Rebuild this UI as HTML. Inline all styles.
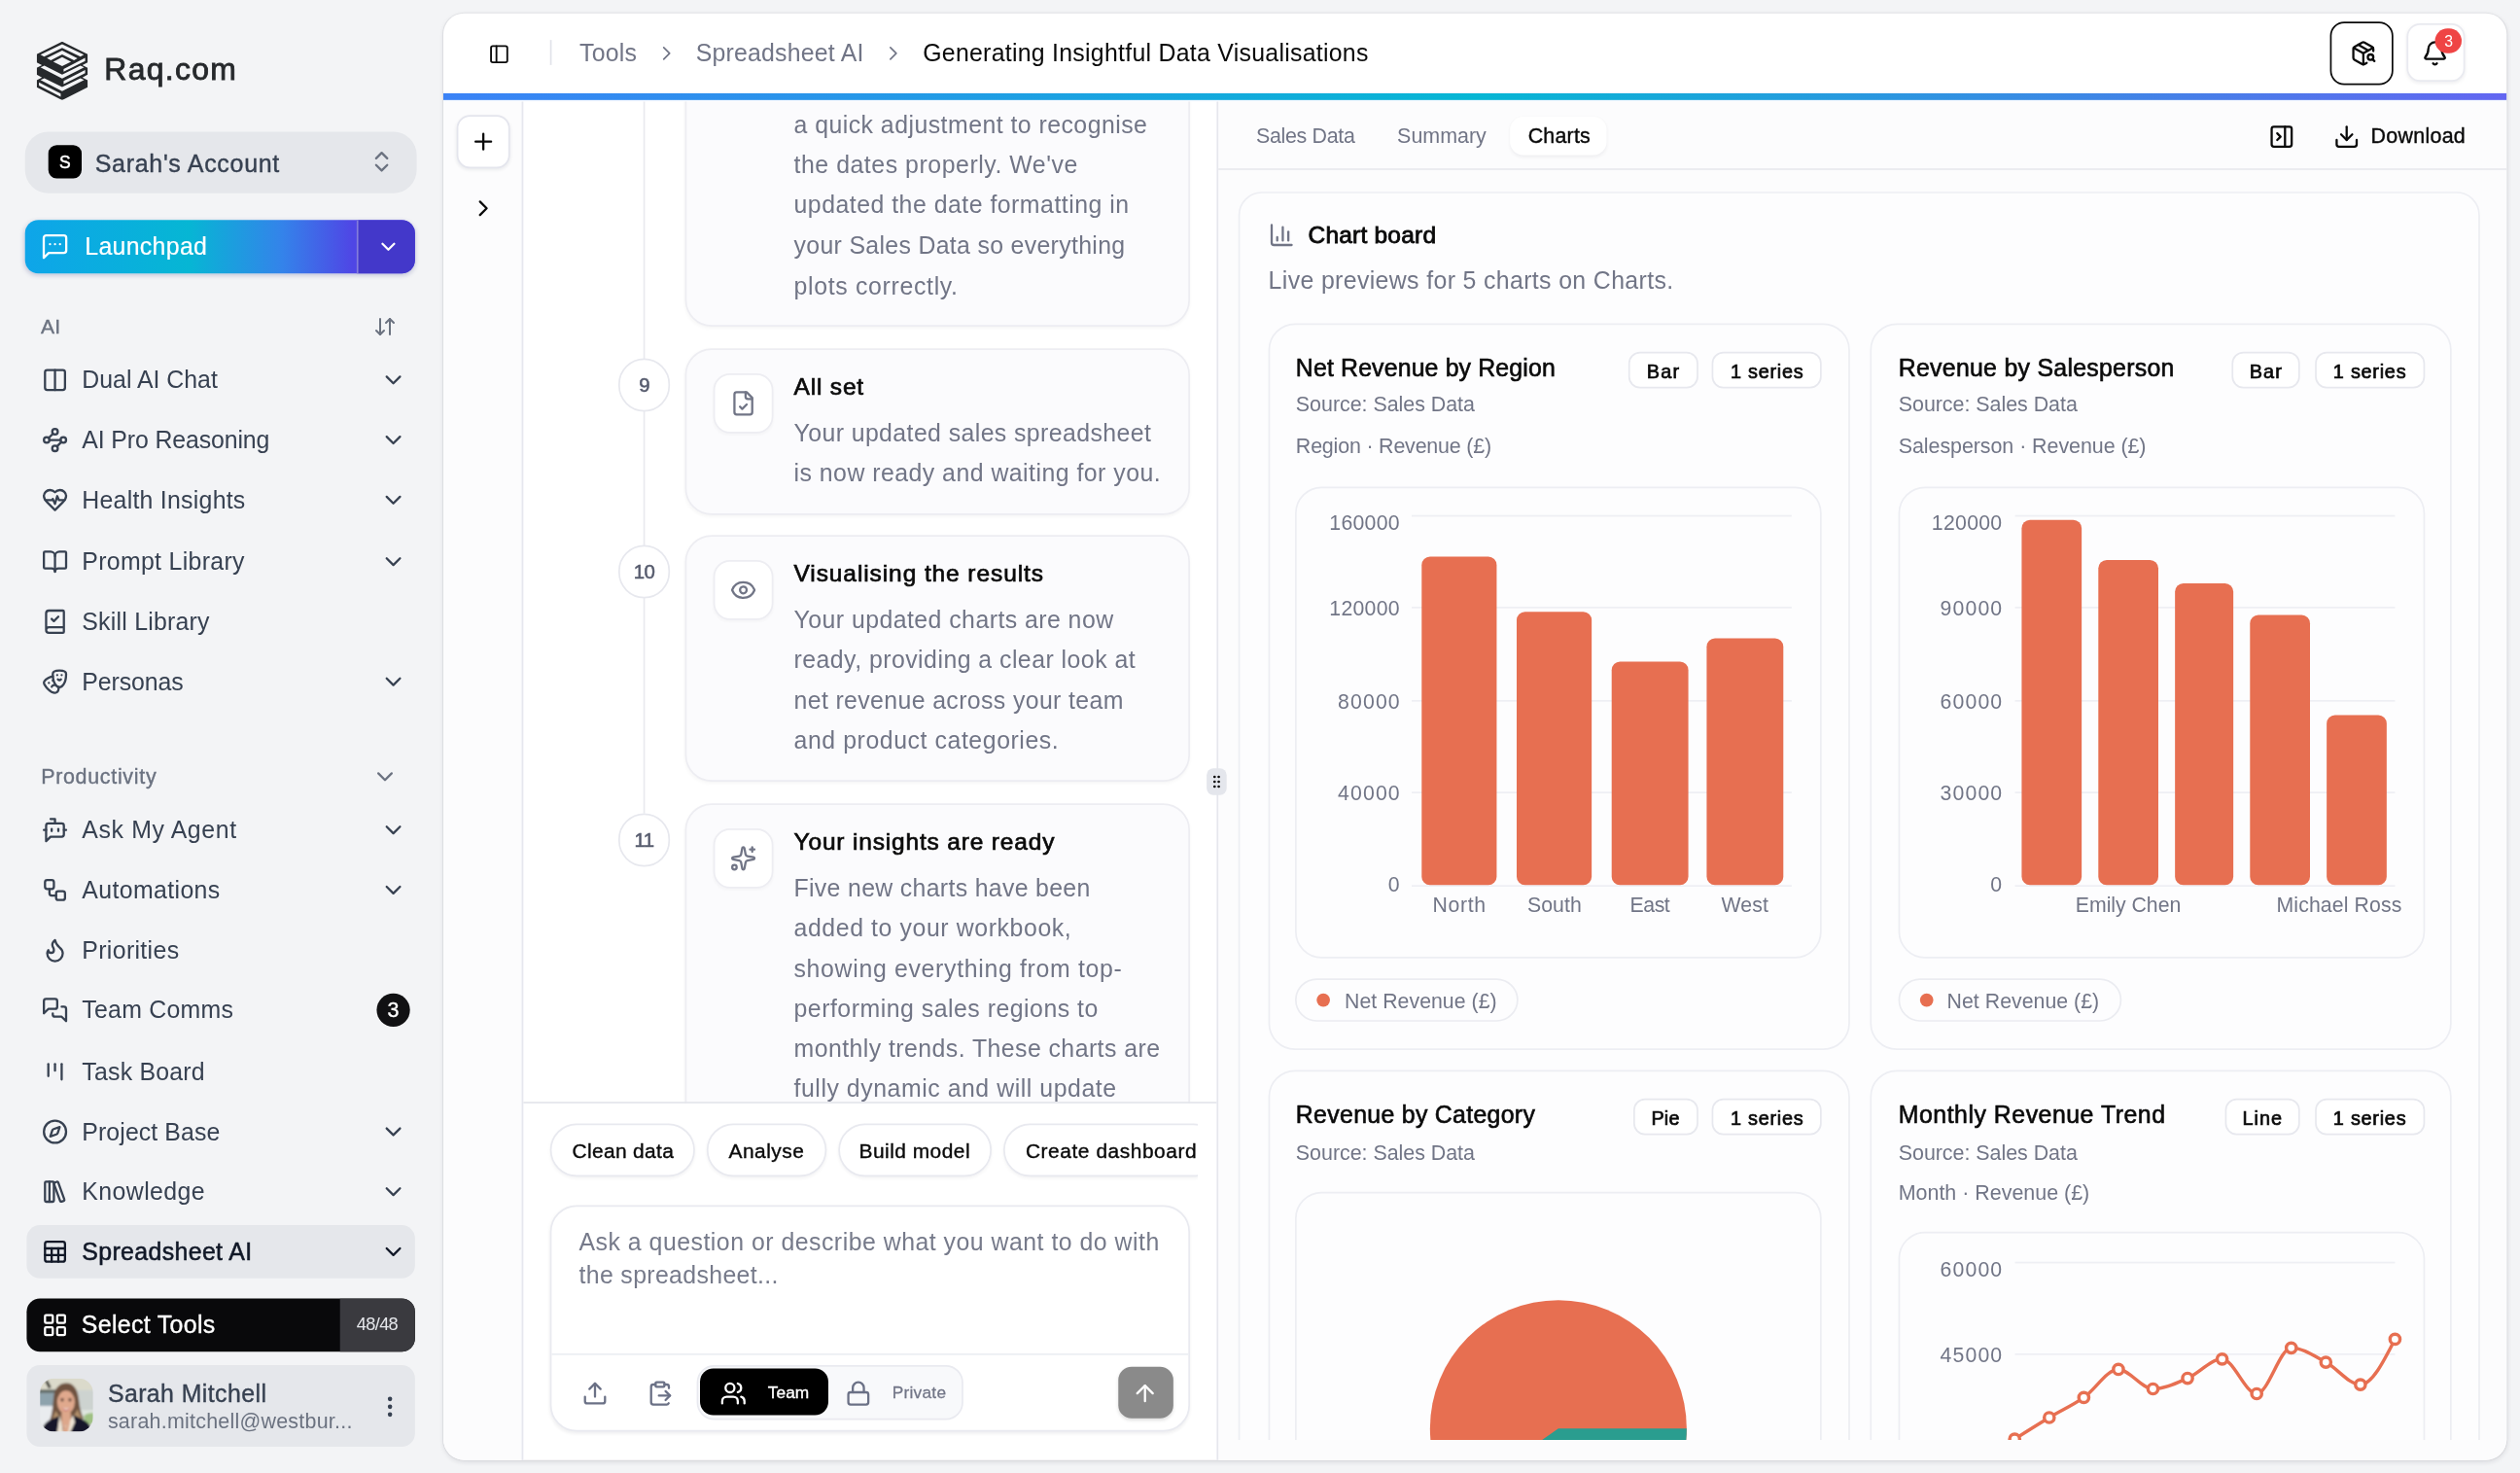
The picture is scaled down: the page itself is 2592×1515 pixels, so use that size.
<!DOCTYPE html><html lang="en">
<head>
<meta charset="utf-8">
<title>Raq.com – Spreadsheet AI – Generating Insightful Data Visualisations</title>
<style>
*{box-sizing:border-box;margin:0;padding:0}
html,body{width:2592px;height:1515px;overflow:hidden;background:#f3f4f6}
body{font-family:"Liberation Sans",sans-serif;color:#0a0a0a;-webkit-font-smoothing:antialiased}
#app{position:absolute;left:0;top:0;width:1512px;height:883.75px;transform:scale(1.7142857);transform-origin:0 0;overflow:hidden;background:#f3f4f6}
.a{position:absolute}
.t{position:absolute;white-space:nowrap;line-height:20px;top:calc(var(--b)*1px - 10px - .3467em);font-size:14.5px}
.m{-webkit-text-stroke:.22px currentColor}
.b{-webkit-text-stroke:.4px currentColor}
.i{position:absolute;fill:none;stroke:currentColor;stroke-width:2;stroke-linecap:round;stroke-linejoin:round;width:16px;height:16px;overflow:visible}
.nav{color:#374151}
.mut{color:#6b7280}
.sl{color:#6a6f82}
.card{position:absolute;background:#fbfbfd;border:1px solid #ededf2;border-radius:16px;box-shadow:0 1px 2px rgba(16,24,40,.035)}
.box{position:absolute;background:#fff;border:1px solid #ededf2;border-radius:10px;box-shadow:0 1px 1.5px rgba(16,24,40,.025)}
.num{position:absolute;width:31.8px;height:31.8px;border-radius:50%;background:#fff;border:1px solid #e7e8ee}
.chip{position:absolute;height:31.5px;border-radius:16px;background:#fff;border:1px solid #e8e9ef;box-shadow:0 1px 2px rgba(16,24,40,.05)}
.bdg{position:absolute;height:22.2px;border-radius:7px;background:#fff;border:1px solid #e7e8ee}
.cbox{position:absolute;background:#fdfdfe;border:1px solid #edeef3;border-radius:16px}
.gl{position:absolute;height:1px;background:#eeeff4}
.bar{position:absolute;background:#e76f51;border-radius:5px}
.pill{position:absolute;height:25.3px;border-radius:13px;background:#fdfdfe;border:1px solid #ebecf1}
.dot{position:absolute;width:8px;height:8px;border-radius:50%;background:#e76f51}
</style>
</head>
<body>
<svg width="0" height="0" style="position:absolute">
<defs>
<symbol id="cd" viewBox="0 0 24 24"><path d="m6 9 6 6 6-6"></path></symbol>
<symbol id="cr" viewBox="0 0 24 24"><path d="m9 18 6-6-6-6"></path></symbol>
</defs>
</svg>
<div id="app">
<!-- sidebar -->
<svg class="a" style="left:22.1px;top:24.9px;width:30.6px;height:35.1px" viewBox="15.5 13.5 103 118.5">
<polygon fill="#26292c" points="67,13.5 118.5,39 118.5,55.5 108,61 118.5,66.5 118.5,80.5 108,86 118.5,91.5 118.5,106 67,132 15.5,106 15.5,91.5 26,86 15.5,80.5 15.5,66.5 26,61 15.5,55.5 15.5,39"></polygon>
<g fill="#f3f4f6">
<polygon points="23,40 67,18.5 111,40 104,44 67,26 30.5,44"></polygon>
<polygon points="36,47 67,31.5 98,47.5 91,51 67,39.5 44,51"></polygon>
<polygon points="67,45 85,54 67,63 49,54"></polygon>
<polygon points="70,69 113.5,46.5 113.5,52.5 70,74.5"></polygon>
<polygon points="23,65.5 31,62 67,80.5 104,62 111.5,65.5 67,88"></polygon>
<polygon points="70,93 113.5,71 113.5,77.5 70,99.5"></polygon>
<polygon points="23,91 31,87.5 67,105.5 104,87.5 111.5,91 67,113.5"></polygon>
<polygon points="20,96 64,118.5 64,125 20,102.5"></polygon>
</g></svg>
<span class="t m" style="left: 62.6px; --b: 48.4; font-size: 18.6px; color: rgb(38, 41, 44); -webkit-text-stroke-width: 0.5px; letter-spacing: 0.766px;">Raq.com</span>
<div class="a" style="left:15.4px;top:79.4px;width:234.4px;height:37.1px;border-radius:14px;background:#e5e7eb"></div>
<div class="a" style="left:29px;top:87.2px;width:20.1px;height:20.1px;border-radius:5px;background:#000"></div>
<span class="t m" style="left:29px;width:20.1px;text-align:center;--b:101.2;font-size:10.2px;color:#fff;-webkit-text-stroke-width:.3px">S</span>
<span class="t nav m" style="left: 57px; --b: 102.85; font-size: 14.6px; letter-spacing: 0.399px;">Sarah's Account</span>
<svg class="i" style="left:220.6px;top:89.3px;color:#6b7280" viewBox="0 0 24 24"><path d="m7 15 5 5 5-5"></path><path d="m7 9 5-5 5 5"></path></svg>
<div class="a" style="left:15.45px;top:131.6px;width:233.95px;height:32.1px;border-radius:8px;background:linear-gradient(90deg,#0ea5e9 0%,#06b6d4 42%,#3483ea 66%,#4f46e5 84%);box-shadow:0 1px 3px rgba(30,41,120,.25);overflow:hidden"><div class="a" style="left:198.75px;top:0;width:36px;height:33px;background:#4338ca;border-left:1px solid rgba(255,255,255,.35)"></div></div>
<svg class="i" style="left:23.8px;top:139.4px;width:18px;height:18px;color:#fff;stroke-width:1.8" viewBox="0 0 24 24"><path d="M21 15a2 2 0 0 1-2 2H7l-4 4V5a2 2 0 0 1 2-2h14a2 2 0 0 1 2 2z"></path><path d="M8 10h.01"></path><path d="M12 10h.01"></path><path d="M16 10h.01"></path></svg>
<span class="t m" style="left: 50.9px; --b: 152.6; color: rgb(255, 255, 255); -webkit-text-stroke-width: 0.12px; letter-spacing: 0.192px;">Launchpad</span>
<svg class="i" style="left:225.85px;top:140.8px;width:14px;height:14px;color:#fff;stroke-width:2.2"><use href="#cd"></use></svg>
<span class="t mut m" style="left: 24.5px; --b: 200.7; font-size: 12.3px; letter-spacing: 0.075px;">AI</span>
<svg class="i" style="left:224.4px;top:189.3px;width:14px;height:14px;color:#6b7280" viewBox="0 0 24 24"><path d="m3 16 4 4 4-4"></path><path d="M7 20V4"></path><path d="m21 8-4-4-4 4"></path><path d="M17 4v16"></path></svg>
<svg class="i" style="left:24.7px;top:219.85px;color:#374151" viewBox="0 0 24 24"><rect width="18" height="18" x="3" y="3" rx="2"></rect><path d="M12 3v18"></path></svg>
<span class="t" style="left: 49.2px; --b: 232.95; color: rgb(55, 65, 81); letter-spacing: -0.002px;">Dual AI Chat</span>
<svg class="i" style="left:227.8px;top:219.85px;color:#374151"><use href="#cd"></use></svg>
<svg class="i" style="left:24.7px;top:256.11px;color:#374151" viewBox="0 0 24 24"><circle cx="12" cy="4.5" r="2.5"></circle><path d="m10.2 6.3-3.9 3.9"></path><circle cx="4.5" cy="12" r="2.5"></circle><path d="M7 12h10"></path><circle cx="19.5" cy="12" r="2.5"></circle><path d="m13.8 17.7 3.9-3.9"></path><circle cx="12" cy="19.5" r="2.5"></circle></svg>
<span class="t" style="left: 49.2px; --b: 269.21; color: rgb(55, 65, 81); letter-spacing: -0.07px;">AI Pro Reasoning</span>
<svg class="i" style="left:227.8px;top:256.11px;color:#374151"><use href="#cd"></use></svg>
<svg class="i" style="left:24.7px;top:292.37px;color:#374151" viewBox="0 0 24 24"><path d="M19 14c1.49-1.46 3-3.21 3-5.5A5.5 5.5 0 0 0 16.5 3c-1.76 0-3 .5-4.5 2-1.5-1.5-2.74-2-4.5-2A5.5 5.5 0 0 0 2 8.5c0 2.3 1.5 4.05 3 5.5l7 7Z"></path><path d="M3.22 12H9.5l.5-1 2 4.5 2-7 1.5 3.5h5.27"></path></svg>
<span class="t" style="left: 49.2px; --b: 305.47; color: rgb(55, 65, 81); letter-spacing: 0.148px;">Health Insights</span>
<svg class="i" style="left:227.8px;top:292.37px;color:#374151"><use href="#cd"></use></svg>
<svg class="i" style="left:24.7px;top:328.63px;color:#374151" viewBox="0 0 24 24"><path d="M12 7v14"></path><path d="M3 18a1 1 0 0 1-1-1V4a1 1 0 0 1 1-1h5a4 4 0 0 1 4 4 4 4 0 0 1 4-4h5a1 1 0 0 1 1 1v13a1 1 0 0 1-1 1h-6a3 3 0 0 0-3 3 3 3 0 0 0-3-3z"></path></svg>
<span class="t" style="left: 49.2px; --b: 341.73; color: rgb(55, 65, 81); letter-spacing: 0.185px;">Prompt Library</span>
<svg class="i" style="left:227.8px;top:328.63px;color:#374151"><use href="#cd"></use></svg>
<svg class="i" style="left:24.7px;top:364.89px;color:#374151" viewBox="0 0 24 24"><path d="M4 19.5v-15A2.5 2.5 0 0 1 6.5 2H19a1 1 0 0 1 1 1v18a1 1 0 0 1-1 1H6.5a1 1 0 0 1 0-5H20"></path><path d="m9 9.5 2 2 4-4"></path></svg>
<span class="t" style="left: 49.2px; --b: 377.99; color: rgb(55, 65, 81); letter-spacing: 0.13px;">Skill Library</span>
<svg class="i" style="left:24.7px;top:401.15px;color:#374151" viewBox="0 0 24 24"><path d="M10 11h.01"></path><path d="M14 6h.01"></path><path d="M18 6h.01"></path><path d="M6.5 13.1h.01"></path><path d="M22 5c0 9-4 12-6 12s-6-3-6-12c0-2 2-3 6-3s6 1 6 3"></path><path d="M17.4 9.9c-.8.8-2 .8-2.8 0"></path><path d="M10.1 7.1C9 7.2 7.7 7.7 6 8.6c-3.5 2-4.7 3.9-3.7 5.6 4.5 7.8 9.5 8.4 11.2 7.4.9-.5 1.9-2.1 1.9-4.7"></path><path d="M9.1 16.5c.3-1.1 1.4-1.7 2.4-1.4"></path></svg>
<span class="t" style="left: 49.2px; --b: 414.25; color: rgb(55, 65, 81); letter-spacing: -0.052px;">Personas</span>
<svg class="i" style="left:227.8px;top:401.15px;color:#374151"><use href="#cd"></use></svg>
<span class="t mut m" style="left: 24.6px; --b: 469.9; font-size: 12.5px; letter-spacing: 0.408px;">Productivity</span>
<svg class="i" style="left:223.4px;top:457.6px;color:#6b7280"><use href="#cd"></use></svg>
<svg class="i" style="left:24.7px;top:489.60px;color:#374151" viewBox="0 0 24 24"><path d="M12 6V2H8"></path><path d="m8 18-4 4V8a2 2 0 0 1 2-2h12a2 2 0 0 1 2 2v8a2 2 0 0 1-2 2Z"></path><path d="M2 12h2"></path><path d="M9 11v2"></path><path d="M15 11v2"></path><path d="M20 12h2"></path></svg>
<span class="t" style="left: 49.2px; --b: 502.70; color: rgb(55, 65, 81); letter-spacing: 0.359px;">Ask My Agent</span>
<svg class="i" style="left:227.8px;top:489.60px;color:#374151"><use href="#cd"></use></svg>
<svg class="i" style="left:24.7px;top:525.86px;color:#374151" viewBox="0 0 24 24"><rect width="8" height="8" x="3" y="3" rx="2"></rect><path d="M7 11v4a2 2 0 0 0 2 2h4"></path><rect width="8" height="8" x="13" y="13" rx="2"></rect></svg>
<span class="t" style="left: 49.2px; --b: 538.96; color: rgb(55, 65, 81); letter-spacing: 0.219px;">Automations</span>
<svg class="i" style="left:227.8px;top:525.86px;color:#374151"><use href="#cd"></use></svg>
<svg class="i" style="left:24.7px;top:562.12px;color:#374151" viewBox="0 0 24 24"><path d="M8.5 14.5A2.5 2.5 0 0 0 11 12c0-1.38-.5-2-1-3-1.072-2.143-.224-4.054 2-6 .5 2.5 2 4.9 4 6.5 2 1.6 3 3.5 3 5.5a7 7 0 1 1-14 0c0-1.153.433-2.294 1-3a2.5 2.5 0 0 0 2.5 2.5z"></path></svg>
<span class="t" style="left: 49.2px; --b: 575.22; color: rgb(55, 65, 81); letter-spacing: 0.199px;">Priorities</span>
<svg class="i" style="left:24.7px;top:598.38px;color:#374151" viewBox="0 0 24 24"><path d="M14 9a2 2 0 0 1-2 2H6l-4 4V4a2 2 0 0 1 2-2h8a2 2 0 0 1 2 2z"></path><path d="M18 9h2a2 2 0 0 1 2 2v11l-4-4h-6a2 2 0 0 1-2-2v-1"></path></svg>
<span class="t" style="left: 49.2px; --b: 611.48; color: rgb(55, 65, 81); letter-spacing: 0.151px;">Team Comms</span>
<svg class="i" style="left:24.7px;top:634.64px;color:#374151" viewBox="0 0 24 24"><path d="M6 5v11"></path><path d="M12 5v6"></path><path d="M18 5v14"></path></svg>
<span class="t" style="left: 49.2px; --b: 647.74; color: rgb(55, 65, 81); letter-spacing: 0.128px;">Task Board</span>
<svg class="i" style="left:24.7px;top:670.90px;color:#374151" viewBox="0 0 24 24"><circle cx="12" cy="12" r="10"></circle><path d="m16.24 7.76-1.804 5.411a2 2 0 0 1-1.265 1.265L7.76 16.24l1.804-5.411a2 2 0 0 1 1.265-1.265z"></path></svg>
<span class="t" style="left: 49.2px; --b: 684.00; color: rgb(55, 65, 81); letter-spacing: 0.053px;">Project Base</span>
<svg class="i" style="left:227.8px;top:670.90px;color:#374151"><use href="#cd"></use></svg>
<svg class="i" style="left:24.7px;top:707.16px;color:#374151" viewBox="0 0 24 24"><rect width="8" height="18" x="3" y="3" rx="1"></rect><path d="M7 3v18"></path><path d="M20.4 18.9c.2.5-.1 1.1-.6 1.3l-1.9.7c-.5.2-1.1-.1-1.3-.6L11.1 5.1c-.2-.5.1-1.1.6-1.3l1.9-.7c.5-.2 1.1.1 1.3.6Z"></path></svg>
<span class="t" style="left: 49.2px; --b: 720.26; color: rgb(55, 65, 81); letter-spacing: 0.244px;">Knowledge</span>
<svg class="i" style="left:227.8px;top:707.16px;color:#374151"><use href="#cd"></use></svg>
<div class="a" style="left:16px;top:735.12px;width:233.4px;height:32.2px;border-radius:8px;background:#e5e7eb"></div>
<svg class="i" style="left:24.7px;top:743.42px;color:#111827" viewBox="0 0 24 24"><rect width="18" height="18" x="3" y="3" rx="2"></rect><path d="M3 9h18"></path><path d="M3 15h18"></path><path d="M9 9v12"></path><path d="M15 9v12"></path></svg>
<span class="t m" style="left: 49.2px; --b: 756.52; color: rgb(17, 24, 39); -webkit-text-stroke-width: 0.32px; letter-spacing: 0.218px;">Spreadsheet AI</span>
<svg class="i" style="left:227.8px;top:743.42px;color:#111827"><use href="#cd"></use></svg>
<div class="a" style="left:225.9px;top:595.9px;width:20px;height:20px;border-radius:50%;background:#111113"></div>
<span class="t m" style="left:225.9px;width:20px;text-align:center;--b:610.4;font-size:12.5px;color:#fff">3</span>
<div class="a" style="left:15.8px;top:778.7px;width:233.6px;height:32.3px;border-radius:8px;background:#09090b;overflow:hidden"><div class="a" style="left:187.8px;top:0;width:46px;height:33px;background:#3a3a3f"></div></div>
<svg class="i" style="left:24.5px;top:786.9px;color:#fff" viewBox="0 0 24 24"><rect width="7" height="7" x="3" y="3" rx="1"></rect><rect width="7" height="7" x="14" y="3" rx="1"></rect><rect width="7" height="7" x="14" y="14" rx="1"></rect><rect width="7" height="7" x="3" y="14" rx="1"></rect></svg>
<span class="t m" style="left: 48.9px; --b: 800; color: rgb(255, 255, 255); letter-spacing: 0.207px;">Select Tools</span>
<span class="t" style="left: 214px; --b: 798.1; font-size: 10.6px; color: rgb(229, 231, 235); letter-spacing: -0.379px;">48/48</span>
<div class="a" style="left:15.8px;top:819.2px;width:233.6px;height:48.6px;border-radius:8px;background:#e5e7eb"></div>
<svg class="a" style="left:24.35px;top:827.3px;width:31.8px;height:31.9px" viewBox="0 0 32 32" preserveAspectRatio="none">
<defs><clipPath id="avc"><rect width="32" height="32" rx="8.500"></rect></clipPath>
<filter id="avb" x="-10%" y="-10%" width="120%" height="120%"><feGaussianBlur stdDeviation=".5"></feGaussianBlur></filter></defs>
<g clip-path="url(#avc)"><g filter="url(#avb)">
<rect x="-2" y="-2" width="36" height="36" fill="#d9dbd4"></rect>
<rect x="-2" y="-2" width="36" height="9.500" fill="#dbdacb"></rect>
<rect x="-2" y="6.800" width="12" height="2" fill="#59625f"></rect>
<rect x="-2" y="8.800" width="11" height="7.800" fill="#8ea3ad"></rect>
<rect x="-2" y="16.600" width="11" height="18" fill="#e9ecef"></rect>
<rect x="22" y="7" width="12" height="14" fill="#cdd3d0"></rect>
<rect x="22" y="19" width="12" height="8" fill="#dfe5df"></rect>
<path d="M26.500 22.500c2-1.500 4-2 6-1.500v6.500h-5.500z" fill="#9fc183"></path>
<path d="M3.800 1.500l2.200 4.200" stroke="#34342f" stroke-width="1.700" fill="none"></path>
<path d="M16 2.800c-4.800 0-7.300 3.600-7.800 8.600-.5 5-.7 9.800-2.200 13.600l6 1.500 8.500-.5 5.800-2c-1.800-3.200-2.400-7.200-2.900-11.700-.6-5-2.700-9.500-7.400-9.500z" fill="#6f5240"></path>
<path d="M9.300 19.500c-.8 3.200-1.800 4.800-2.800 6l6-1.500z M22.800 18.500c.8 3 1.800 4.800 3.200 6l-6.200-.8z" fill="#b08f6b"></path>
<ellipse cx="15.700" cy="14.300" rx="5.300" ry="6.900" fill="#e0a98d"></ellipse>
<path d="M10.300 10.200c1.200-3.400 4-4.700 6.600-3.800 1.800.6 3.300 2 4 4.200-.4-3.600-2.300-6-5.200-6-3 0-5 2.200-5.400 5.600z" fill="#6f5240"></path>
<path d="M12.300 12.300h2.200 M17 12.300h2.200" stroke="#5a3d30" stroke-width=".7" fill="none"></path>
<ellipse cx="13.400" cy="13.300" rx=".9" ry=".5" fill="#3f2b25"></ellipse><ellipse cx="18.100" cy="13.300" rx=".9" ry=".5" fill="#3f2b25"></ellipse>
<path d="M13.200 17.300c1.500 1.400 3.600 1.400 5.100 0-.6 1.800-1.500 2.500-2.600 2.500s-2-.7-2.500-2.500z" fill="#c9736b"></path>
<path d="M13.700 17.600c1.300.7 2.800.7 4.100 0-.5.900-1.200 1.200-2 1.200s-1.600-.3-2.100-1.200z" fill="#fbf4f0"></path>
<path d="M13 20.500h5.600v8h-5.600z" fill="#dda78b"></path>
<path d="M1.200 33c.2-6 3.600-8 10.400-10.300l3.400 10.300z M31.500 33c-.5-5.500-3.200-8-11.200-10.800l-4.300 10.800z" fill="#131929"></path>
<path d="M11.800 22.300l-1.500 10.700h3.800l-1-6z M19.900 22l1.200 4.300-3 6.700h-3.500z" fill="#efe5d6"></path>
<path d="M13.300 25.500l2.300 4 2.700-4-1.500 7.500h-2.700z" fill="#dda78b"></path>
</g></g></svg>
<span class="t nav m" style="left: 64.7px; --b: 841.1; letter-spacing: 0.248px;">Sarah Mitchell</span>
<span class="t mut" style="left: 64.7px; --b: 856.9; font-size: 12.5px; letter-spacing: 0.141px;">sarah.mitchell@westbur...</span>
<svg class="i" style="left:225.7px;top:835.7px;color:#374151" viewBox="0 0 24 24"><circle cx="12" cy="5" r="1"></circle><circle cx="12" cy="12" r="1"></circle><circle cx="12" cy="19" r="1"></circle></svg>
<!-- main -->
<div class="a" style="left:265.8px;top:7.9px;width:1238.4px;height:867.9px;border-radius:12.5px;background:#fff;box-shadow:0 1px 3px rgba(16,24,40,.10),0 0 0 .6px rgba(16,24,40,.05)"></div>
<div class="a" style="left:265.8px;top:7.9px;width:1238.4px;height:867.9px;border-radius:12.5px;overflow:hidden">
<div class="a" style="left:0;top:53px;width:48.2px;height:820px;background:#fcfcfd;border-right:1px solid #e6e7ee"></div>
<div class="a" style="left:464.1px;top:53px;width:780px;height:820px;background:#fcfcfd;border-left:1.1px solid #e6e7ed"></div>
<div class="a" style="left:0;top:48.1px;width:1238.4px;height:4.4px;background:linear-gradient(90deg,#3b82f6 0%,#06b6d4 50%,#6366f1 100%);box-shadow:0 0 1.2px rgba(59,130,246,.3)"></div>
</div>
<svg class="i" style="left:293.1px;top:25.6px;width:13px;height:13px;color:#0a0a0a" viewBox="0 0 24 24"><rect width="18" height="18" x="3" y="3" rx="2"></rect><path d="M9 3v18"></path></svg>
<div class="a" style="left:329.7px;top:23.8px;width:1px;height:15.4px;background:#e2e3ea"></div>
<span class="t" style="left: 347.7px; --b: 36.8; color: rgb(113, 117, 134); letter-spacing: 0.135px;">Tools</span>
<svg class="i" style="left:392.8px;top:24.8px;width:14px;height:14px;color:#717586;stroke-width:1.7"><use href="#cr"></use></svg>
<span class="t" style="left: 417.5px; --b: 36.8; color: rgb(113, 117, 134); letter-spacing: 0.118px;">Spreadsheet AI</span>
<svg class="i" style="left:528.5px;top:24.8px;width:14px;height:14px;color:#717586;stroke-width:1.7"><use href="#cr"></use></svg>
<span class="t" style="left: 553.7px; --b: 36.8; color: rgb(10, 10, 10); letter-spacing: 0.16px;">Generating Insightful Data Visualisations</span>
<div class="a" style="left:1398.4px;top:13.2px;width:38px;height:37.4px;border-radius:8.5px;border:1.3px solid #0a0a0a;background:#fff"></div>
<svg class="i" style="left:1409.9px;top:23.7px;color:#0a0a0a" viewBox="0 0 24 24"><path d="M21 10V8a2 2 0 0 0-1-1.73l-7-4a2 2 0 0 0-2 0l-7 4A2 2 0 0 0 3 8v8a2 2 0 0 0 1 1.73l7 4a2 2 0 0 0 2 0l2-1.14"></path><path d="m7.500 4.270 9 5.150"></path><path d="M3.290 7 12 12l8.710-5"></path><path d="M12 22V12"></path><circle cx="18.500" cy="15.500" r="2.500"></circle><path d="M20.270 17.270 22 19"></path></svg>
<div class="a" style="left:1443.8px;top:13.9px;width:35.6px;height:35.6px;border-radius:8px;border:1px solid #e9eaf0;background:#fff;box-shadow:0 1px 2px rgba(16,24,40,.06)"></div>
<svg class="i" style="left:1453.2px;top:23.6px;color:#0a0a0a" viewBox="0 0 24 24"><path d="M10.268 21a2 2 0 0 0 3.464 0"></path><path d="M3.262 15.326A1 1 0 0 0 4 17h16a1 1 0 0 0 .74-1.673C19.410 13.956 18 12.499 18 8A6 6 0 0 0 6 8c0 4.499-1.411 5.956-2.738 7.326"></path></svg>
<div class="a" style="left:1461.3px;top:16.7px;width:15.8px;height:15.8px;border-radius:50%;background:#ef4444"></div>
<span class="t" style="left:1461.3px;width:15.8px;text-align:center;--b:27.85;font-size:9.2px;color:#fff">3</span>
<div class="a" style="left:274.1px;top:69.2px;width:32.4px;height:32.3px;border-radius:8px;background:#fff;border:1px solid #e4e5ed;box-shadow:0 1px 2px rgba(16,24,40,.07)"></div>
<svg class="i" style="left:282.2px;top:77.3px;color:#0a0a0a" viewBox="0 0 24 24"><path d="M5 12h14"></path><path d="M12 5v14"></path></svg>
<svg class="i" style="left:281.6px;top:117.2px;color:#0a0a0a"><use href="#cr"></use></svg>
<div class="a" style="left:0;top:0;width:1512px;height:884px;clip-path:inset(60.9px 781.7px 222px 313.6px)">
<div class="a" style="left:386px;top:0;width:1px;height:488px;background:#e9eaef"></div>
<div class="card" style="left:411.2px;top:-40px;width:302.4px;height:236.3px"></div>
<span class="t" style="left: 476.3px; --b: 80.20; color: rgb(113, 117, 134); letter-spacing: 0.269px;">a quick adjustment to recognise</span>
<span class="t" style="left: 476.3px; --b: 104.30; color: rgb(113, 117, 134); letter-spacing: 0.316px;">the dates properly. We've</span>
<span class="t" style="left: 476.3px; --b: 128.40; color: rgb(113, 117, 134); letter-spacing: 0.287px;">updated the date formatting in</span>
<span class="t" style="left: 476.3px; --b: 152.50; color: rgb(113, 117, 134); letter-spacing: 0.188px;">your Sales Data so everything</span>
<span class="t" style="left: 476.3px; --b: 176.60; color: rgb(113, 117, 134); letter-spacing: 0.393px;">plots correctly.</span>
<div class="card" style="left:411.2px;top:208.8px;width:302.4px;height:99.9px"></div>
<div class="num" style="left:370.6px;top:215.1px"></div>
<span class="t m" style="left:370.6px;width:31.8px;text-align:center;--b:235.40;font-size:11.9px;color:#565b6d;-webkit-text-stroke-width:.3px;letter-spacing:-.35px"><span>9</span></span>
<div class="box" style="left:428.4px;top:224.0px;width:35.2px;height:35.6px"></div>
<svg class="i" style="left:438.1px;top:233.9px;color:#717586" viewBox="0 0 24 24"><path d="M15 2H6a2 2 0 0 0-2 2v16a2 2 0 0 0 2 2h12a2 2 0 0 0 2-2V7Z"></path><path d="M14 2v4a2 2 0 0 0 2 2h4"></path><path d="m9 15 2 2 4-4"></path></svg>
<span class="t b" style="left: 476.3px; --b: 236.80; color: rgb(10, 10, 10); font-size: 14.3px; letter-spacing: 0.477px;">All set</span>
<span class="t" style="left: 476.3px; --b: 264.70; color: rgb(113, 117, 134); letter-spacing: 0.236px;">Your updated sales spreadsheet</span>
<span class="t" style="left: 476.3px; --b: 288.80; color: rgb(113, 117, 134); letter-spacing: 0.276px;">is now ready and waiting for you.</span>
<div class="card" style="left:411.2px;top:320.8px;width:302.4px;height:148.7px"></div>
<div class="num" style="left:370.6px;top:327.1px"></div>
<span class="t m" style="left:370.6px;width:31.8px;text-align:center;--b:347.40;font-size:11.9px;color:#565b6d;-webkit-text-stroke-width:.3px;letter-spacing:-.35px"><span>10</span></span>
<div class="box" style="left:428.4px;top:336.0px;width:35.2px;height:35.6px"></div>
<svg class="i" style="left:438.1px;top:345.9px;color:#717586" viewBox="0 0 24 24"><path d="M2.062 12.348a1 1 0 0 1 0-.696 10.750 10.750 0 0 1 19.876 0 1 1 0 0 1 0 .696 10.750 10.750 0 0 1-19.876 0"></path><circle cx="12" cy="12" r="3"></circle></svg>
<span class="t b" style="left: 476.3px; --b: 348.80; color: rgb(10, 10, 10); font-size: 14.3px; letter-spacing: 0.527px;">Visualising the results</span>
<span class="t" style="left: 476.3px; --b: 376.70; color: rgb(113, 117, 134); letter-spacing: 0.262px;">Your updated charts are now</span>
<span class="t" style="left: 476.3px; --b: 400.80; color: rgb(113, 117, 134); letter-spacing: 0.271px;">ready, providing a clear look at</span>
<span class="t" style="left: 476.3px; --b: 424.90; color: rgb(113, 117, 134); letter-spacing: 0.217px;">net revenue across your team</span>
<span class="t" style="left: 476.3px; --b: 449.00; color: rgb(113, 117, 134); letter-spacing: 0.33px;">and product categories.</span>
<div class="card" style="left:411.2px;top:481.8px;width:302.4px;height:260.0px"></div>
<div class="num" style="left:370.6px;top:488.1px"></div>
<span class="t m" style="left:370.6px;width:31.8px;text-align:center;--b:508.40;font-size:11.9px;color:#565b6d;-webkit-text-stroke-width:.3px;letter-spacing:-.35px"><span>11</span></span>
<div class="box" style="left:428.4px;top:497.0px;width:35.2px;height:35.6px"></div>
<svg class="i" style="left:438.1px;top:506.9px;color:#717586" viewBox="0 0 24 24"><path d="M11.017 2.814a1 1 0 0 1 1.966 0l1.051 5.558a2 2 0 0 0 1.594 1.594l5.558 1.051a1 1 0 0 1 0 1.966l-5.558 1.051a2 2 0 0 0-1.594 1.594l-1.051 5.558a1 1 0 0 1-1.966 0l-1.051-5.558a2 2 0 0 0-1.594-1.594l-5.558-1.051a1 1 0 0 1 0-1.966l5.558-1.051a2 2 0 0 0 1.594-1.594z"></path><path d="M20 2v4"></path><path d="M22 4h-4"></path><circle cx="4" cy="20" r="2"></circle></svg>
<span class="t b" style="left: 476.3px; --b: 509.80; color: rgb(10, 10, 10); font-size: 14.3px; letter-spacing: 0.481px;">Your insights are ready</span>
<span class="t" style="left: 476.3px; --b: 537.70; color: rgb(113, 117, 134); letter-spacing: 0.188px;">Five new charts have been</span>
<span class="t" style="left: 476.3px; --b: 561.80; color: rgb(113, 117, 134); letter-spacing: 0.346px;">added to your workbook,</span>
<span class="t" style="left: 476.3px; --b: 585.90; color: rgb(113, 117, 134); letter-spacing: 0.394px;">showing everything from top-</span>
<span class="t" style="left: 476.3px; --b: 610.00; color: rgb(113, 117, 134); letter-spacing: 0.292px;">performing sales regions to</span>
<span class="t" style="left: 476.3px; --b: 634.10; color: rgb(113, 117, 134); letter-spacing: 0.255px;">monthly trends. These charts are</span>
<span class="t" style="left: 476.3px; --b: 658.20; color: rgb(113, 117, 134); letter-spacing: 0.315px;">fully dynamic and will update</span>
</div>
<div class="a" style="left:313.6px;top:661.4px;width:416.6px;height:1px;background:#e5e6ec"></div>
<div class="a" style="left:0;top:0;width:1512px;height:884px;clip-path:inset(0 793.3px 0 0)">
<div class="chip" style="left:330.4px;top:674.3px;width:86.9px"></div>
<span class="t m" style="left:330.4px;width:86.9px;text-align:center;--b:695;font-size:12.2px;color:#0a0a0a"><span style="letter-spacing: 0.205px;">Clean data</span></span>
<div class="chip" style="left:424.0px;top:674.3px;width:71.8px"></div>
<span class="t m" style="left:424.0px;width:71.8px;text-align:center;--b:695;font-size:12.2px;color:#0a0a0a"><span style="letter-spacing: 0.29px;">Analyse</span></span>
<div class="chip" style="left:502.9px;top:674.3px;width:91.8px"></div>
<span class="t m" style="left:502.9px;width:91.8px;text-align:center;--b:695;font-size:12.2px;color:#0a0a0a"><span style="letter-spacing: 0.291px;">Build model</span></span>
<div class="chip" style="left:601.8px;top:674.3px;width:130.0px"></div>
<span class="t m" style="left:601.8px;width:130.0px;text-align:center;--b:695;font-size:12.2px;color:#0a0a0a"><span style="letter-spacing: 0.328px;">Create dashboard</span></span>
</div>
<div class="a" style="left:330.4px;top:723.3px;width:383.5px;height:135.7px;border-radius:16px;background:#fff;border:1px solid #e9eaf0;box-shadow:0 1px 2px rgba(16,24,40,.06)"></div>
<div class="a" style="left:331px;top:811.6px;width:382.3px;height:1px;background:#eceef3"></div>
<span class="t" style="left: 347.4px; --b: 750.2; color: rgb(118, 122, 138); letter-spacing: 0.288px;">Ask a question or describe what you want to do with</span>
<span class="t" style="left: 347.4px; --b: 770; color: rgb(118, 122, 138); letter-spacing: 0.201px;">the spreadsheet...</span>
<svg class="i" style="left:349.3px;top:827.7px;color:#6b7186" viewBox="0 0 24 24"><path d="M12 3v12"></path><path d="m17 8-5-5-5 5"></path><path d="M21 15v4a2 2 0 0 1-2 2H5a2 2 0 0 1-2-2v-4"></path></svg>
<svg class="i" style="left:387.8px;top:827.7px;color:#6b7186" viewBox="0 0 24 24"><path d="M11 14h10"></path><path d="M16 4h2a2 2 0 0 1 2 2v1.344"></path><path d="m17 18 4-4-4-4"></path><path d="M8 4H6a2 2 0 0 0-2 2v14a2 2 0 0 0 2 2h12a2 2 0 0 0 1.793-1.113"></path><rect x="8" y="2" width="8" height="4" rx="1"></rect></svg>
<div class="a" style="left:417.6px;top:819.1px;width:160.8px;height:33.1px;border-radius:10.5px;background:#f8f9fb;border:1px solid #e9eaf0"></div>
<div class="a" style="left:419.9px;top:821.3px;width:77.1px;height:28px;border-radius:8px;background:#000"></div>
<svg class="i" style="left:432.2px;top:827.7px;color:#fff" viewBox="0 0 24 24"><path d="M16 21v-2a4 4 0 0 0-4-4H6a4 4 0 0 0-4 4v2"></path><circle cx="9" cy="7" r="4"></circle><path d="M22 21v-2a4 4 0 0 0-3-3.870"></path><path d="M16 3.130a4 4 0 0 1 0 7.750"></path></svg>
<span class="t m" style="left: 460.7px; --b: 839.8; font-size: 10.1px; color: rgb(255, 255, 255); letter-spacing: 0.038px;">Team</span>
<svg class="i" style="left:507.4px;top:827.7px;color:#6b7186" viewBox="0 0 24 24"><rect width="18" height="11" x="3" y="11" rx="2"></rect><path d="M7 11V7a5 5 0 0 1 10 0v4"></path></svg>
<span class="t m" style="left: 535.3px; --b: 839.8; font-size: 10.1px; color: rgb(113, 117, 134); -webkit-text-stroke-width: 0.15px; letter-spacing: 0.146px;">Private</span>
<div class="a" style="left:671px;top:819.6px;width:32.6px;height:31.8px;border-radius:8px;background:#8a8a8a;box-shadow:0 1px 2px rgba(0,0,0,.12)"></div>
<svg class="i" style="left:679.3px;top:827.6px;color:#fff" viewBox="0 0 24 24"><path d="m5 12 7-7 7 7"></path><path d="M12 19V5"></path></svg>
<div class="a" style="left:724px;top:460.5px;width:12.4px;height:16.3px;border-radius:4px;background:#e4e6ec"></div>
<svg class="a" style="left:725.3px;top:463.7px;width:10px;height:10px" viewBox="0 0 24 24" fill="#0a0a0a"><circle cx="9" cy="5" r="1.900"></circle><circle cx="9" cy="12" r="1.900"></circle><circle cx="9" cy="19" r="1.900"></circle><circle cx="15" cy="5" r="1.900"></circle><circle cx="15" cy="12" r="1.900"></circle><circle cx="15" cy="19" r="1.900"></circle></svg>
<!-- right -->
<div class="a" style="left:731px;top:101.3px;width:773px;height:1px;background:#e8e9ee"></div>
<span class="t" style="left: 753.7px; --b: 85.9; font-size: 12.5px; color: rgb(113, 117, 134); letter-spacing: -0.195px;">Sales Data</span>
<span class="t" style="left: 838.3px; --b: 85.9; font-size: 12.5px; color: rgb(113, 117, 134); letter-spacing: 0.003px;">Summary</span>
<div class="a" style="left:906.4px;top:69.6px;width:57.9px;height:23.6px;border-radius:8px;background:#fff;box-shadow:0 1px 2px rgba(16,24,40,.05)"></div>
<span class="t m" style="left: 916.8px; --b: 85.9; font-size: 12.5px; color: rgb(10, 10, 10); letter-spacing: 0.114px;">Charts</span>
<svg class="i" style="left:1361.4px;top:73.9px;color:#0a0a0a" viewBox="0 0 24 24"><rect width="18" height="18" x="3" y="3" rx="2"></rect><path d="M15 3v18"></path><path d="m8 9 3 3-3 3"></path></svg>
<svg class="i" style="left:1400px;top:73.9px;color:#0a0a0a" viewBox="0 0 24 24"><path d="M12 15V3"></path><path d="M21 15v4a2 2 0 0 1-2 2H5a2 2 0 0 1-2-2v-4"></path><path d="m7 10 5 5 5-5"></path></svg>
<span class="t m" style="left: 1422.5px; --b: 86; font-size: 12.5px; color: rgb(10, 10, 10); letter-spacing: 0.158px;">Download</span>
<div class="a" style="left:0;top:0;width:1512px;height:884px;clip-path:inset(102px 8px 20.1px 731px)">
<div class="a" style="left:743.1px;top:114.5px;width:745px;height:900px;border-radius:14px;background:#fdfdfe;border:1px solid #edeef3"></div>
<svg class="i" style="left:760.5px;top:133.4px;color:#717586" viewBox="0 0 24 24"><path d="M3 3v16a2 2 0 0 0 2 2h16"></path><path d="M18 17V9"></path><path d="M13 17V5"></path><path d="M8 17v-3"></path></svg>
<span class="t b" style="left: 784.9px; --b: 146.1; font-size: 14.3px; color: rgb(10, 10, 10); -webkit-text-stroke-width: 0.5px; letter-spacing: 0.12px;">Chart board</span>
<span class="t" style="left: 761px; --b: 172.8; color: rgb(113, 117, 134); letter-spacing: 0.213px;">Live previews for 5 charts on Charts.</span>
<div class="a" style="left:760.5px;top:194.1px;width:349.4px;height:436.1px;border-radius:16px;background:#fdfdfe;border:1px solid #edeef3"></div>
<span class="t m" style="left: 777.5px; --b: 226.30; color: rgb(10, 10, 10); -webkit-text-stroke-width: 0.36px; letter-spacing: 0.087px;">Net Revenue by Region</span>
<div class="bdg" style="left:1027.3px;top:211.0px;width:66.1px"></div>
<span class="t b" style="left:1027.8px;width:65.1px;text-align:center;--b:226.90;font-size:11.6px;color:#0a0a0a"><span style="letter-spacing: 0.427px;">1 series</span></span>
<div class="bdg" style="left:977.4px;top:211.0px;width:41.4px"></div>
<span class="t b" style="left:977.9px;width:40.4px;text-align:center;--b:226.90;font-size:11.6px;color:#0a0a0a"><span style="letter-spacing: 0.677px;">Bar</span></span>
<span class="t" style="left: 777.5px; --b: 247.80; font-size: 12.5px; color: rgb(113, 117, 134); letter-spacing: -0.018px;">Source: Sales Data</span>
<span class="t" style="left: 777.5px; --b: 272.10; font-size: 12.5px; color: rgb(113, 117, 134); letter-spacing: -0.111px;">Region · Revenue (£)</span>
<div class="cbox" style="left:777.2px;top:291.5px;width:316.2px;height:283.7px"></div>
<div class="gl" style="left:847.2px;top:308.5px;width:228.3px"></div>
<div class="gl" style="left:847.2px;top:364.1px;width:228.3px"></div>
<div class="gl" style="left:847.2px;top:419.6px;width:228.3px"></div>
<div class="gl" style="left:847.2px;top:475.1px;width:228.3px"></div>
<div class="gl" style="left:847.2px;top:530.7px;width:228.3px"></div>
<span class="t" style="left:779.8px;width:60px;text-align:right;--b:318.20;font-size:12.4px;color:#717586"><span style="letter-spacing: 0.168px; margin-right: -0.168px;">160000</span></span>
<span class="t" style="left:779.8px;width:60px;text-align:right;--b:369.55;font-size:12.4px;color:#717586"><span style="letter-spacing: 0.168px; margin-right: -0.168px;">120000</span></span>
<span class="t" style="left:779.8px;width:60px;text-align:right;--b:425.10;font-size:12.4px;color:#717586"><span style="letter-spacing: 0.658px; margin-right: -0.658px;">80000</span></span>
<span class="t" style="left:779.8px;width:60px;text-align:right;--b:480.65;font-size:12.4px;color:#717586"><span style="letter-spacing: 0.658px; margin-right: -0.658px;">40000</span></span>
<span class="t" style="left:779.8px;width:60px;text-align:right;--b:535.70;font-size:12.4px;color:#717586"><span>0</span></span>
<div class="bar" style="left:853.0px;top:333.5px;width:45.4px;height:197.8px"></div>
<span class="t" style="left:833.0px;width:85.4px;text-align:center;--b:547.5;font-size:12.4px;color:#717586"><span style="letter-spacing: 0.397px;">North</span></span>
<div class="bar" style="left:910.0px;top:367.3px;width:45.4px;height:164.0px"></div>
<span class="t" style="left:890.0px;width:85.4px;text-align:center;--b:547.5;font-size:12.4px;color:#717586"><span style="letter-spacing: 0.052px;">South</span></span>
<div class="bar" style="left:967.2px;top:396.9px;width:45.4px;height:134.4px"></div>
<span class="t" style="left:947.2px;width:85.4px;text-align:center;--b:547.5;font-size:12.4px;color:#717586"><span style="letter-spacing: -0.232px;">East</span></span>
<div class="bar" style="left:1024.3px;top:382.5px;width:45.4px;height:148.8px"></div>
<span class="t" style="left:1004.3px;width:85.4px;text-align:center;--b:547.5;font-size:12.4px;color:#717586"><span style="letter-spacing: 0.067px;">West</span></span>
<div class="pill" style="left:777.4px;top:587.4px;width:133.8px"></div>
<div class="dot" style="left:790.3px;top:596px"></div>
<span class="t" style="left: 806.8px; --b: 605; font-size: 12.4px; color: rgb(113, 117, 134); letter-spacing: 0.027px;">Net Revenue (£)</span>
<div class="a" style="left:1122.1px;top:194.1px;width:349.4px;height:436.1px;border-radius:16px;background:#fdfdfe;border:1px solid #edeef3"></div>
<span class="t m" style="left: 1139.1px; --b: 226.30; color: rgb(10, 10, 10); -webkit-text-stroke-width: 0.36px; letter-spacing: 0.165px;">Revenue by Salesperson</span>
<div class="bdg" style="left:1388.9px;top:211.0px;width:66.1px"></div>
<span class="t b" style="left:1389.4px;width:65.1px;text-align:center;--b:226.90;font-size:11.6px;color:#0a0a0a"><span style="letter-spacing: 0.427px;">1 series</span></span>
<div class="bdg" style="left:1339.0px;top:211.0px;width:41.4px"></div>
<span class="t b" style="left:1339.5px;width:40.4px;text-align:center;--b:226.90;font-size:11.6px;color:#0a0a0a"><span style="letter-spacing: 0.677px;">Bar</span></span>
<span class="t" style="left: 1139.1px; --b: 247.80; font-size: 12.5px; color: rgb(113, 117, 134); letter-spacing: -0.018px;">Source: Sales Data</span>
<span class="t" style="left: 1139.1px; --b: 272.10; font-size: 12.5px; color: rgb(113, 117, 134); letter-spacing: -0.033px;">Salesperson · Revenue (£)</span>
<div class="cbox" style="left:1138.6px;top:291.5px;width:316.2px;height:283.7px"></div>
<div class="gl" style="left:1208.8px;top:308.5px;width:228.4px"></div>
<div class="gl" style="left:1208.8px;top:364.1px;width:228.4px"></div>
<div class="gl" style="left:1208.8px;top:419.6px;width:228.4px"></div>
<div class="gl" style="left:1208.8px;top:475.1px;width:228.4px"></div>
<div class="gl" style="left:1208.8px;top:530.7px;width:228.4px"></div>
<span class="t" style="left:1141.2px;width:60px;text-align:right;--b:318.20;font-size:12.4px;color:#717586"><span style="letter-spacing: 0.168px; margin-right: -0.168px;">120000</span></span>
<span class="t" style="left:1141.2px;width:60px;text-align:right;--b:369.55;font-size:12.4px;color:#717586"><span style="letter-spacing: 0.658px; margin-right: -0.658px;">90000</span></span>
<span class="t" style="left:1141.2px;width:60px;text-align:right;--b:425.10;font-size:12.4px;color:#717586"><span style="letter-spacing: 0.658px; margin-right: -0.658px;">60000</span></span>
<span class="t" style="left:1141.2px;width:60px;text-align:right;--b:480.65;font-size:12.4px;color:#717586"><span style="letter-spacing: 0.658px; margin-right: -0.658px;">30000</span></span>
<span class="t" style="left:1141.2px;width:60px;text-align:right;--b:535.70;font-size:12.4px;color:#717586"><span>0</span></span>
<div class="bar" style="left:1213.2px;top:312.1px;width:35.8px;height:219.2px"></div>
<div class="bar" style="left:1258.9px;top:335.9px;width:35.8px;height:195.4px"></div>
<div class="bar" style="left:1304.5px;top:349.7px;width:35.8px;height:181.6px"></div>
<div class="bar" style="left:1350.2px;top:369.3px;width:35.8px;height:162.0px"></div>
<div class="bar" style="left:1395.8px;top:429.2px;width:35.8px;height:102.1px"></div>
<span class="t" style="left: 1245.3px; --b: 547.5; font-size: 12.4px; color: rgb(113, 117, 134); letter-spacing: -0.007px;">Emily Chen</span>
<span class="t" style="left: 1365.9px; --b: 547.5; font-size: 12.4px; color: rgb(113, 117, 134); letter-spacing: 0.066px;">Michael Ross</span>
<div class="pill" style="left:1138.8px;top:587.4px;width:133.8px"></div>
<div class="dot" style="left:1151.7px;top:596px"></div>
<span class="t" style="left: 1168.2px; --b: 605; font-size: 12.4px; color: rgb(113, 117, 134); letter-spacing: 0.027px;">Net Revenue (£)</span>
<div class="a" style="left:760.5px;top:642.3px;width:349.4px;height:400.2px;border-radius:16px;background:#fdfdfe;border:1px solid #edeef3"></div>
<span class="t m" style="left: 777.5px; --b: 674.50; color: rgb(10, 10, 10); -webkit-text-stroke-width: 0.36px; letter-spacing: 0.181px;">Revenue by Category</span>
<div class="bdg" style="left:1027.3px;top:659.2px;width:66.1px"></div>
<span class="t b" style="left:1027.8px;width:65.1px;text-align:center;--b:675.10;font-size:11.6px;color:#0a0a0a"><span style="letter-spacing: 0.427px;">1 series</span></span>
<div class="bdg" style="left:979.8px;top:659.2px;width:39.0px"></div>
<span class="t b" style="left:980.3px;width:38.0px;text-align:center;--b:675.10;font-size:11.6px;color:#0a0a0a"><span style="letter-spacing: 0.117px;">Pie</span></span>
<span class="t" style="left: 777.5px; --b: 696.00; font-size: 12.5px; color: rgb(113, 117, 134); letter-spacing: -0.018px;">Source: Sales Data</span>
<div class="cbox" style="left:777.2px;top:715.1px;width:316.2px;height:283.7px"></div>
<svg class="a" style="left:858.3px;top:779.8px;width:154px;height:154px;overflow:visible" viewBox="-77 -77 154 154"><circle r="77" fill="#e76f51"></circle><path d="M0 0H77A77 77 0 0 1 -62.8 44.600Z" fill="#2a9d8f"></path></svg>
<div class="a" style="left:1122.1px;top:642.3px;width:349.4px;height:400.2px;border-radius:16px;background:#fdfdfe;border:1px solid #edeef3"></div>
<span class="t m" style="left: 1139.1px; --b: 674.50; color: rgb(10, 10, 10); -webkit-text-stroke-width: 0.36px; letter-spacing: 0.302px;">Monthly Revenue Trend</span>
<div class="bdg" style="left:1388.9px;top:659.2px;width:66.1px"></div>
<span class="t b" style="left:1389.4px;width:65.1px;text-align:center;--b:675.10;font-size:11.6px;color:#0a0a0a"><span style="letter-spacing: 0.427px;">1 series</span></span>
<div class="bdg" style="left:1334.8px;top:659.2px;width:45.6px"></div>
<span class="t b" style="left:1335.3px;width:44.6px;text-align:center;--b:675.10;font-size:11.6px;color:#0a0a0a"><span style="letter-spacing: 0.559px;">Line</span></span>
<span class="t" style="left: 1139.1px; --b: 696.00; font-size: 12.5px; color: rgb(113, 117, 134); letter-spacing: -0.018px;">Source: Sales Data</span>
<span class="t" style="left: 1139.1px; --b: 720.30; font-size: 12.5px; color: rgb(113, 117, 134); letter-spacing: -0.002px;">Month · Revenue (£)</span>
<div class="cbox" style="left:1138.6px;top:739.2px;width:316.2px;height:283.7px"></div>
<div class="gl" style="left:1208.8px;top:756.6px;width:228.4px"></div>
<div class="gl" style="left:1208.8px;top:811.8px;width:228.4px"></div>
<div class="gl" style="left:1208.8px;top:867.5px;width:228.4px"></div>
<span class="t" style="left:1141.2px;width:60px;text-align:right;--b:766.30;font-size:12.4px;color:#717586"><span style="letter-spacing: 0.658px; margin-right: -0.658px;">60000</span></span>
<span class="t" style="left:1141.2px;width:60px;text-align:right;--b:817.30;font-size:12.4px;color:#717586"><span style="letter-spacing: 0.658px; margin-right: -0.658px;">45000</span></span>
<span class="t" style="left:1141.2px;width:60px;text-align:right;--b:873.00;font-size:12.4px;color:#717586"><span style="letter-spacing: 0.658px; margin-right: -0.658px;">30000</span></span>
<svg class="a" style="left:0;top:0;width:1512px;height:884px;overflow:visible" viewBox="0 0 1512 884" fill="none" stroke="#e76f51" stroke-width="2" stroke-linecap="round" stroke-linejoin="round"><path d="M1208.80 863.40C1215.72 859.02 1222.63 854.65 1229.55 850.50C1236.46 846.35 1243.38 843.32 1250.29 838.50C1257.21 833.68 1264.12 821.60 1271.04 821.60C1277.95 821.60 1284.87 833.30 1291.78 833.30C1298.70 833.30 1305.61 829.88 1312.53 826.90C1319.44 823.92 1326.36 815.40 1333.27 815.40C1340.19 815.40 1347.10 836.20 1354.02 836.20C1360.93 836.20 1367.85 808.70 1374.76 808.70C1381.68 808.70 1388.59 813.63 1395.51 817.30C1402.42 820.97 1409.34 830.70 1416.25 830.70C1423.17 830.70 1430.08 817.10 1437.00 803.50"></path><circle cx="1208.80" cy="863.40" r="3" fill="#fff"></circle><circle cx="1229.55" cy="850.50" r="3" fill="#fff"></circle><circle cx="1250.29" cy="838.50" r="3" fill="#fff"></circle><circle cx="1271.04" cy="821.60" r="3" fill="#fff"></circle><circle cx="1291.78" cy="833.30" r="3" fill="#fff"></circle><circle cx="1312.53" cy="826.90" r="3" fill="#fff"></circle><circle cx="1333.27" cy="815.40" r="3" fill="#fff"></circle><circle cx="1354.02" cy="836.20" r="3" fill="#fff"></circle><circle cx="1374.76" cy="808.70" r="3" fill="#fff"></circle><circle cx="1395.51" cy="817.30" r="3" fill="#fff"></circle><circle cx="1416.25" cy="830.70" r="3" fill="#fff"></circle><circle cx="1437.00" cy="803.50" r="3" fill="#fff"></circle></svg>
</div>
</div>


</body></html>
